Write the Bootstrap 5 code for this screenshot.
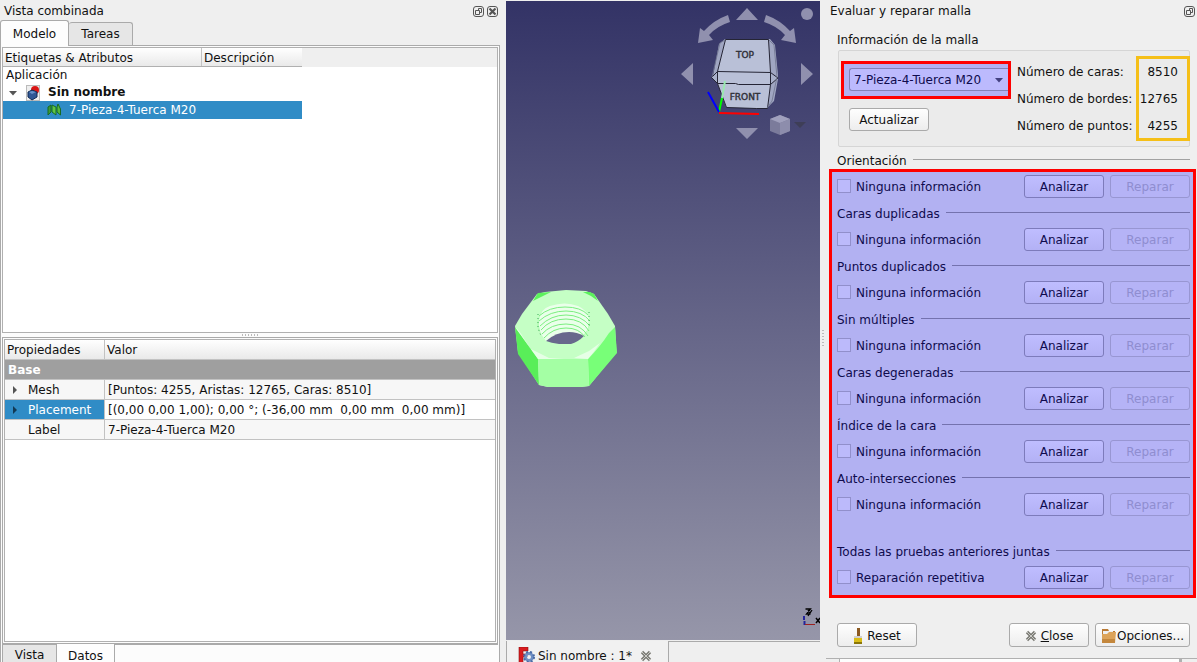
<!DOCTYPE html>
<html lang="es">
<head>
<meta charset="utf-8">
<meta name="viewport" content="width=device-width, initial-scale=1">
<title>Evaluar y reparar malla</title>
<link href="https://cdn.jsdelivr.net/npm/bootstrap@5.3.0/dist/css/bootstrap.min.css" rel="stylesheet">
<style>
body{font:12px/16px "DejaVu Sans",sans-serif;color:#111;background:#efefef}
.app{display:grid;grid-template-columns:506fr 314fr 377fr;height:100vh;overflow:hidden}
.app>*{min-width:0;min-height:0}
.dock-title{height:20px;padding:3px 0 0 4px;flex:none}
.dock-title h1{font-size:12px;line-height:16px;margin:0;font-weight:400}
.dock-tools{gap:3px;margin-right:8px;padding-top:2px}
.dock-btn{border:0;background:none;padding:0;width:11px;height:12px;display:block}
.dock-btn svg,.ico{display:block}
.right-title{padding-left:10px}
.right-title .dock-btn{margin:2px 2px 0 0}
/* tabs */
.tabrow{height:25px;flex:none}
.tab-btn{border:1px solid #aaa;background:#e6e6e6;padding:0;line-height:16px;color:#111}
.tabrow .tab-btn{border-bottom:0;border-radius:3px 3px 0 0}
.tab-on{background:#fdfdfd;position:relative}
.tabrow .tab-on{width:69px;height:26px}
.tabrow .tab-off{width:64px;height:23px;border-left:0}
/* left pane */
.pane{border:1px solid #aaa;border-bottom:0;background:#fcfcfc;margin-right:6px;padding:1px 1px 0;display:grid;grid-template-rows:286fr 4px 325fr;flex:1;min-height:0}
.pane>*{min-height:0;min-width:0}
.tree{border:1px solid #b0b0b0;background:#fff;overflow:hidden}
.hdr{background:linear-gradient(#fff,#e9e9e9);border-bottom:1px solid #b0b0b0}
.tree-head{background:#efefef;height:19px}
.tree-cols{width:299px;height:19px}
.tree-cols span{padding:2px 0 0 2px}
.tree-cols span:first-child{width:199px;border-right:1px solid #c4c4c4}
.tree-row{height:17px;line-height:17px;width:299px;padding-left:3px}
.tree-row.sel{height:18px;line-height:18px;padding-left:44px}
.branch{padding-left:4px;gap:7px}
.sel{background:#308cc6;color:#fff}
.dots{height:2px;width:17px;background:repeating-linear-gradient(90deg,#bbb 0 1px,transparent 1px 3px)}
.frame{border:1px solid #aaa;padding:1px;flex:1;min-height:0}
.frame-in{border:1px solid #b0b0b0;background:#fff;height:100%}
.props{width:100%;border-collapse:separate;border-spacing:0;line-height:18px}
.props th,.props td{padding:2px 0 0 3px;height:20px;line-height:17px;border-bottom:1px solid #c2c2c2;font-weight:400;background:#fff;vertical-align:top}
.props thead th{height:19px;line-height:17px;padding-left:2px;background:linear-gradient(#fff,#e9e9e9)}
.props th:first-child{width:100px;border-right:1px solid #c2c2c2}
.props .alt>*{background:#f7f7f7}
.props tbody th:first-child{padding-left:23px;position:relative}
.props tbody .grp th:first-child{background:#9f9f9f;color:#fff;font-weight:700;padding-left:3px;border-right:0}
.props tbody th.sel{background:#308cc6}
.twist{position:absolute;left:7px;top:6px}
.low-tabs{height:18px;flex:none;overflow:hidden}
.low-tabs .tab-btn{border-top:0;height:24px;padding-bottom:2px}
.low-tabs .tab-off{width:55px;border-top:1px solid #aaa;height:24px}
.low-tabs .tab-on{width:58px;border-left:0;padding-top:2px}
.rest{border-top:1px solid #aaa}
/* 3D view */
.view3d{background:linear-gradient(#333366,#9696a9);position:relative;overflow:hidden;margin-top:1px}
.navcube{position:absolute;right:0;top:0}
.nut{position:absolute;left:0;top:279px}
.axes{position:absolute;right:0;bottom:0}
.grip{position:absolute;width:2px;height:17px;background:repeating-linear-gradient(#bbb 0 1px,transparent 1px 3px)}
.doc-tabs{height:22px;padding-top:1px}
.doc-tab{width:163px;border-left:1px solid #aaa;border-right:1px solid #aaa;background:#f1f1f1;padding:7px 0 0 11px}
.doc-tab .doc-ico{margin:-1px 3px 0 0}
.doc-tab .doc-x{margin:2px 0 0 8px}
/* right dock */
.q-btn{--bs-btn-padding-x:0;--bs-btn-padding-y:0;--bs-btn-font-size:12px;--bs-btn-line-height:16px;--bs-btn-border-radius:3px;--bs-btn-border-color:#aaa;--bs-btn-color:#111;width:80px;height:23px;background:linear-gradient(#fefefe,#ededed)}
.foot{margin:25px 7px 0 17px;gap:6px}
.foot .q-btn{height:24px;padding-top:1px}
.foot .wide{width:95px}
.info-h{padding:12px 0 2px 17px}
.grpbox{border:1px solid #d5d5d5;border-radius:2px;background:#ebebeb;margin:0 7px 0 18px;height:97px;padding:5px 0 0 2px}
.update{margin:9px 0 0 8px}
.red{border:3px solid #f00;background:#b2b1f2;color:#0f0b4d}
.combo-wrap{width:170px;height:38px;margin-top:5px;padding:4px 0 0 5px}
.combo{height:23px;width:159px;font-size:12px;line-height:16px;padding:1px 0 0 4px;color:#0f0b4d;border:1px solid #8381b8;border-right:0;border-radius:3px 0 0 3px;background:url("data:image/svg+xml,%3Csvg xmlns='http://www.w3.org/2000/svg' width='8' height='5'%3E%3Cpath d='M0 0h8L4 4.500z' fill='%23434080'/%3E%3C/svg%3E") no-repeat right 5px top 9px #bcbafd}
.nums{display:flex;flex-direction:column;gap:11px;white-space:nowrap}
.nums-labels{padding:8px 0 0 6px}
.yellow{border:3px solid #f5bf18;width:54px;height:85px;padding:5px 9px 0 0;margin-right:-1px;text-align:right;align-items:flex-end}
.sect{height:30px;gap:6px}
.sect h2,.plain-h{font-size:12px;line-height:16px;font-weight:400;margin:0}
.sect h2{padding-top:1px}
.sect::after{content:"";flex:1;height:1px;background:#7472ae;margin-top:-2px}
.sect.last{margin-top:20px}
.sect.out{margin:-2px 7px -6px 17px}
.sect.out::after{background:#a2a2a2}
.tests{margin:0 1px 0 9px;padding:3px 3px 6px 5px}
.tests label{padding-left:5px}
.tests .q-btn{--bs-btn-border-color:#7d7bbb;--bs-btn-color:#0f0b4d;--bs-btn-disabled-color:#8f8dd0;--bs-btn-disabled-border-color:#9896d2;--bs-btn-disabled-opacity:1;background:linear-gradient(#bfbdff,#b3b1f5)}
.tests .q-btn:disabled{background:#b5b3f6;margin-left:6px}
.tests .form-check-input{width:14px;height:14px;margin:0 0 1px;border-radius:0;border:1px solid #918fcb;background-color:#bcbafb}
.stub{height:4px;margin:11px 0 0 6px;border-top:1px solid #b0b0b0}
.stub div{border:1px solid #b0b0b0;border-width:0 3px 0 1px;margin:0 15px 0 13px;background:#fdfdfd;height:3px}
</style>
</head>
<body>
<div class="app">
  <aside class="d-flex flex-column">
    <header class="dock-title d-flex justify-content-between">
      <h1>Vista combinada</h1>
      <div class="d-flex dock-tools">
        <button class="dock-btn" aria-label="Flotar"><svg width="11" height="11" fill="none" stroke="#555"><rect x=".5" y=".5" width="10" height="10" rx="2.500"/><path d="M5.500 4.500v-2h3v4h-2M2.500 4.500h4v4h-4z"/></svg></button>
        <button class="dock-btn" aria-label="Cerrar"><svg width="11" height="11" fill="none" stroke="#555"><rect x=".5" y=".5" width="10" height="10" rx="2.500"/><path d="M2.500 2.500l6 6M8.500 2.500l-6 6" stroke-width="2.200"/></svg></button>
      </div>
    </header>
    <div class="tabrow d-flex align-items-end">
      <button class="tab-btn tab-on align-self-start">Modelo</button><button class="tab-btn tab-off">Tareas</button>
    </div>
    <div class="pane">
      <section class="tree">
        <div class="tree-head"><div class="tree-cols hdr d-flex"><span>Etiquetas &amp; Atributos</span><span>Descripción</span></div></div>
        <div class="tree-row">Aplicación</div>
        <div class="tree-row branch d-flex align-items-center fw-bold">
          <svg class="ico" width="12" height="8"><path d="M2 2h8L6 6.500z" fill="#555"/></svg>
          <svg class="ico" width="15" height="16"><rect x=".5" y=".5" width="13" height="15" fill="#eee" stroke="#bbb"/><circle cx="9" cy="5" r="4" fill="#d91515"/><path d="M2 7l4-2 5 2v5l-5 3-4-3z" fill="#2f5795" stroke="#122b55"/><path d="M3 7l3-1 4 1-4 2z" fill="#6691ca"/></svg>
          Sin nombre</div>
        <div class="tree-row sel d-flex align-items-center">
          <svg class="ico me-2" width="14" height="14"><path d="M1 4l3-2v7l-3 3z" fill="#3c9a35" stroke="#176b22"/><path d="M5 2l4 2v8L5 9z" fill="#5fc446" stroke="#176b22"/><path d="M10 4l1-3 2.500 5v6l-3.500-3z" fill="#55b83c" stroke="#176b22"/></svg>7-Pieza-4-Tuerca M20</div>
      </section>
      <div class="d-flex justify-content-center align-items-center"><div class="dots"></div></div>
      <section class="d-flex flex-column">
        <div class="frame"><div class="frame-in">
          <table class="props">
            <thead><tr><th>Propiedades</th><th>Valor</th></tr></thead>
            <tbody>
              <tr class="grp"><th colspan="2">Base</th></tr>
              <tr class="alt"><th><svg class="twist" width="6" height="8"><path d="M1 0l4 4-4 4z" fill="#555"/></svg>Mesh</th><td>[Puntos: 4255, Aristas: 12765, Caras: 8510]</td></tr>
              <tr><th class="sel"><svg class="twist" width="6" height="8"><path d="M1 0l4 4-4 4z" fill="#123a55"/></svg>Placement</th><td>[(0,00 0,00 1,00); 0,00 °; (-36,00 mm&nbsp; 0,00 mm&nbsp; 0,00 mm)]</td></tr>
              <tr class="alt"><th>Label</th><td>7-Pieza-4-Tuerca M20</td></tr>
            </tbody>
          </table>
        </div></div>
        <div class="low-tabs d-flex"><button class="tab-btn tab-off">Vista</button><button class="tab-btn tab-on">Datos</button><div class="rest flex-fill"></div></div>
      </section>
    </div>
  </aside>

  <main class="d-flex flex-column">
    <div class="view3d flex-fill">
      <svg class="navcube" width="150" height="149" viewBox="670 1 150 149">
        <g fill="#9090ae"><path d="M747 8l11 12h-22zM747 139l-11-11h22zM681 74l12-11v22zM813 74l-12-11v22z"/><circle cx="807" cy="14" r="6"/>
        <path d="M728 15l2 7q-13 4-21 13l4 5-15 3 2-15 4 3q10-11 24-16zM766 15l-2 7q13 4 21 13l-4 5 15 3-2-15-4 3q-10-11-24-16z"/></g>
        <path d="M725 39l-6 5-6 32v3l5 5 8 23h42l6-6 4-22v-4l-3-30-5-6z" fill="#a0a6c2"/>
        <path d="M725.500 39.500h43l2 33v11l-3 25-41-1-9-24v-12z" fill="#b9c0d7"/>
        <path d="M770.500 72.500l7.500 5.500-7.500 6zM717.500 71.500l-6 6 6 6z" fill="#a9b0ca"/>
        <path d="M725.500 39.500h43l2 33-53-1zM717.500 71.500v12h18l3 1h32V72.500l7.500 5.500-7.500 6.500-3 24h-11l-30-1-9-24-6-6 6-6" fill="none" stroke="#252535"/>
        <path d="M725 40l-5 3-8 34M769 40l5 5 3 32-5 24-5 7" fill="none" stroke="#70758f" stroke-width=".8"/>
        <g font-family="DejaVu Sans" fill="#303038" stroke="#303038" stroke-width=".4" text-anchor="middle"><text x="745" y="58" font-size="9">TOP</text><text x="745" y="100" font-size="9">FRONT</text></g>
        <path d="M719 112l3-14" stroke="#0f0" stroke-width="2"/><path d="M725 81l-3 17" stroke="#9be8b0" stroke-width="2"/><path d="M708 92l11 20" stroke="#00f" stroke-width="2"/><path d="M719 113l40 1" stroke="#f00" stroke-width="2"/>
        <path d="M780 115l10 4v12l-10 4-10-4v-12z" fill="#7b7b9b"/><path d="M780 115l10 4-10 4-10-4z" fill="#a0a0bd"/><path d="M780 123l10-4v12l-10 4z" fill="#8d8dac"/><path d="M794 122h12l-6 6z" fill="#3e3e57"/>
      </svg>
      <svg class="nut" width="120" height="120" viewBox="506 280 120 120">
        <path d="M515 326l7-12 15-20 8-2 21-2 20 1 8 3 14 20 7 12 1.500 26-27.500 34-8 1h-33l-9-2-21-33z" fill="#c5ffc5"/>
        <path d="M536 296l2-3 13-1q-8 4-18 9zM583 292h7l4 2 4 7-7-5z" fill="#5cf25c"/>
        <path d="M515 327l23 32 1 26-21-31z" fill="#59ee59"/>
        <path d="M588 359q12-12 21-26l6-6 2 26-28 33z" fill="#78ff78"/>
        <path d="M538 359h50l1 27-8 1h-33l-9-2z" fill="#a4ffa4"/>
        <path d="M515 327q4 3 8 10l8 12 18 9 15 1h-26zM588 359l-14-1 15-7 11-8q-6 9-12 16z" fill="#e6ffe6"/>
        <ellipse cx="563" cy="324" rx="26" ry="19" fill="#b6fcb6"/>
        <path d="M539 321q1-12 11-15 15-5 28 0 9 4 11 12l-1 11-6 8-36 4q-8-9-7-20z" fill="#eaffea"/>
        <g fill="none" stroke="#7bef80"><path d="M539 316q10-9 26-9t23 8M539 321q11-10 27-10t24 10M540 326q11-11 26-11t24 11M541 330q9-11 25-11t23 12M542 334q9-10 24-10t22 12M544 338q9-10 22-10t19 9"/></g>
        <path d="M546 341q10-9 23-9 8 0 15 4-6 6-13 8h-12q-8-1-13-3z" fill="#68688c"/>
        <path d="M538 314v14l3 8M589 312v14" fill="none" stroke="#39a957" stroke-dasharray="1 3"/>
      </svg>
      <svg class="axes" width="18" height="34" viewBox="802 606 18 34"><path d="M804 616v4M804.500 621v4" stroke="#24249c" stroke-width="2" fill="none"/><path d="M805 624.500h10" stroke="#9c2020"/><path d="M805.500 609h5l-4 5h4M808 610l2 3 2-3-4 6" fill="none" stroke="#000" stroke-width="1.300"/><path d="M816 618l4 5M820 618l-4 5" stroke="#000" stroke-width="1.500"/></svg>
    </div>
    <div class="doc-tabs d-flex">
      <div class="doc-tab d-flex">
        <svg class="ico doc-ico" width="17" height="16"><path d="M1 0h9v4H5v3h4v3H5v6H1z" fill="#d81b1f" stroke="#8d1010" stroke-width=".6"/><circle cx="11" cy="10" r="3.500" fill="none" stroke="#6f8fc4" stroke-width="3"/><circle cx="11" cy="10" r="5" fill="none" stroke="#4a6ba5" stroke-width="2" stroke-dasharray="2 2"/></svg>
        <span>Sin nombre : 1*</span>
        <svg class="ico doc-x" width="12" height="12" viewBox="0 0 12 12"><path d="M2 2l8 8M10 2l-8 8" stroke="#7c7c76" stroke-width="3.200"/><path d="M2 2l8 8M10 2l-8 8" stroke="#c9c9c4"/></svg>
      </div>
      <div class="rest flex-fill"></div>
    </div>
  </main>

  <aside class="d-flex flex-column position-relative">
    <div class="grip" style="left:2px;top:330px"></div>
    <header class="dock-title right-title d-flex justify-content-between">
      <h1>Evaluar y reparar malla</h1>
      <button class="dock-btn" aria-label="Flotar"><svg width="11" height="11" fill="none" stroke="#555"><rect x=".5" y=".5" width="10" height="10" rx="2.500"/><path d="M5.500 4.500v-2h3v4h-2M2.500 4.500h4v4h-4z"/></svg></button>
    </header>
    <h2 class="plain-h info-h">Información de la malla</h2>
    <div class="grpbox d-flex">
      <div>
        <div class="combo-wrap red"><select class="combo form-select" aria-label="Malla"><option>7-Pieza-4-Tuerca M20</option></select></div>
        <button class="btn q-btn update d-block">Actualizar</button>
      </div>
      <div class="nums nums-labels flex-fill"><span>Número de caras:</span><span>Número de bordes:</span><span>Número de puntos:</span></div>
      <div class="nums yellow"><span>8510</span><span>12765</span><span>4255</span></div>
    </div>
    <div class="sect out d-flex align-items-center"><h2>Orientación</h2></div>
    <div class="tests red" id="tests"></div>
    <div class="foot d-flex">
      <button class="btn q-btn me-auto d-flex align-items-center justify-content-center gap-1"><svg width="10" height="16"><path d="M4 0h3v8H4z" fill="#8c5a22"/><path d="M1 8h8v2H1z" fill="#d0d0d0"/><path d="M1 10h8v5H1z" fill="#d9bd18"/><path d="M1 14h8v2H1z" fill="#8a7508"/></svg>Reset</button>
      <button class="btn q-btn d-flex align-items-center justify-content-center gap-1"><svg width="12" height="12"><path d="M2 2l8 8M10 2l-8 8" stroke="#7c7c76" stroke-width="3.200"/><path d="M2 2l8 8M10 2l-8 8" stroke="#c9c9c4"/></svg><span><u>C</u>lose</span></button>
      <button class="btn q-btn wide d-flex align-items-center justify-content-center"><svg width="16" height="16"><path d="M1 1h6l1 2h6v3H1z" fill="#b97a35"/><path d="M2 3h10v6H2z" fill="#eee"/><path d="M1 6h5l2-2h7l-1 11H1z" fill="#dca359"/><path d="M1 11h13v4H1z" fill="#c4873d"/></svg>Opciones...</button>
    </div>
    <div class="stub"><div></div></div>
  </aside>
</div>
<script src="https://cdn.jsdelivr.net/npm/bootstrap@5.3.0/dist/js/bootstrap.bundle.min.js"></script>
<script>
// Each test: section heading (the first one sits above the box) and check label
const none = 'Ninguna información';
const tests = [
  ['', none], ['Caras duplicadas', none], ['Puntos duplicados', none], ['Sin múltiples', none],
  ['Caras degeneradas', none], ['Índice de la cara', none], ['Auto-intersecciones', none],
  ['Todas las pruebas anteriores juntas', 'Reparación repetitiva']
];
document.getElementById('tests').innerHTML = tests.map(([title, label], i) =>
  (title ? `<div class="sect d-flex align-items-center${i === 7 ? ' last' : ''}"><h2>${title}</h2></div>` : '') +
  `<div class="d-flex align-items-center">
    <input type="checkbox" class="form-check-input" id="t${i}"><label class="me-auto" for="t${i}">${label}</label>
    <button class="btn q-btn">Analizar</button><button class="btn q-btn" disabled>Reparar</button>
  </div>`).join('');
</script>
</body>
</html>
